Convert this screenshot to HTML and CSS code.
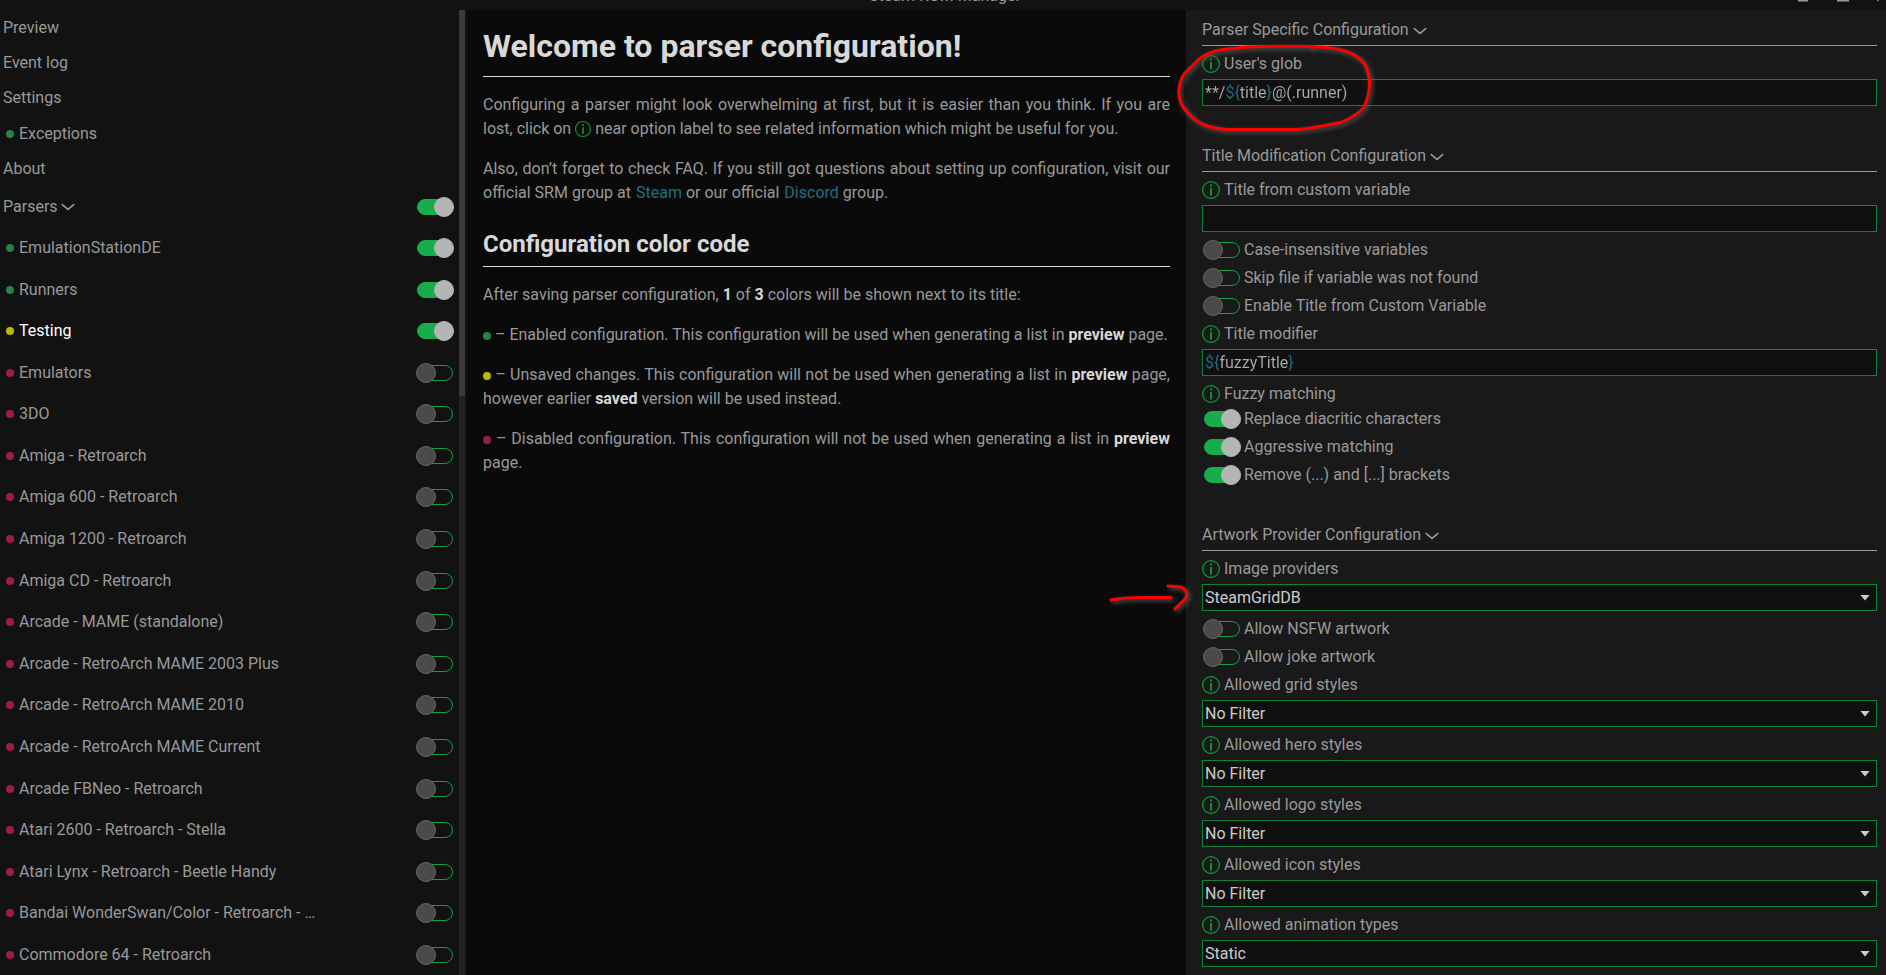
FILE: index.html
```html
<!DOCTYPE html>
<html lang="en">
<head>
<meta charset="utf-8">
<title>Steam ROM Manager</title>
<link rel="stylesheet" href="styles.css">
</head>
<body>
<svg class="defs" aria-hidden="true">
  <symbol id="info" viewBox="0 0 18 18"><circle cx="9" cy="9" r="8.4" fill="none" stroke="currentColor" stroke-width="1.2"/><path d="M9 3.500v2M9 7v7.500" stroke="currentColor" stroke-width="1.800"/></symbol>
  <symbol id="chevron" viewBox="0 0 14 8"><path d="M.7 1.2 7 6.4l6.300-5.200" fill="none" stroke="currentColor" stroke-width="1.6"/></symbol>
</svg>
<div class="app">
  <header class="titlebar">
    <span class="titlebar-name">Steam ROM Manager</span>
    <svg class="window-buttons" viewBox="0 0 90 10" aria-hidden="true"><path d="M2 .5h10M41 .5h12" stroke="#999" stroke-width="2"/><path d="M81 1l2-1" stroke="#999"/></svg>
  </header>
  <div class="columns">
    <aside class="sidebar">
      <nav class="nav">
        <a class="nav-link" href="#preview">Preview</a>
        <a class="nav-link" href="#log">Event log</a>
        <a class="nav-link" href="#settings">Settings</a>
        <a class="nav-link nav-marked" href="#exceptions"><i class="dot green"></i>Exceptions</a>
        <a class="nav-link" href="#about">About</a>
        <div class="row row-parsers"><a class="row-name" href="#parsers">Parsers <svg class="chevron"><use href="#chevron"/></svg></a><input class="toggle" type="checkbox" aria-label="Parsers" checked></div>
        <div class="parsers">
          <div class="row"><a class="row-name" href="#p1"><i class="dot green"></i><span class="ellipsis">EmulationStationDE</span></a><input class="toggle" type="checkbox" aria-label="EmulationStationDE" checked></div>
          <div class="row"><a class="row-name" href="#p2"><i class="dot green"></i><span class="ellipsis">Runners</span></a><input class="toggle" type="checkbox" aria-label="Runners" checked></div>
          <div class="row"><a class="row-name active" href="#p3"><i class="dot yellow"></i><span class="ellipsis">Testing</span></a><input class="toggle" type="checkbox" aria-label="Testing" checked></div>
          <div class="row"><a class="row-name" href="#p4"><i class="dot red"></i><span class="ellipsis">Emulators</span></a><input class="toggle" type="checkbox" aria-label="Emulators"></div>
          <div class="row"><a class="row-name" href="#p5"><i class="dot red"></i><span class="ellipsis">3DO</span></a><input class="toggle" type="checkbox" aria-label="3DO"></div>
          <div class="row"><a class="row-name" href="#p6"><i class="dot red"></i><span class="ellipsis">Amiga - Retroarch</span></a><input class="toggle" type="checkbox" aria-label="Amiga - Retroarch"></div>
          <div class="row"><a class="row-name" href="#p7"><i class="dot red"></i><span class="ellipsis">Amiga 600 - Retroarch</span></a><input class="toggle" type="checkbox" aria-label="Amiga 600 - Retroarch"></div>
          <div class="row"><a class="row-name" href="#p8"><i class="dot red"></i><span class="ellipsis">Amiga 1200 - Retroarch</span></a><input class="toggle" type="checkbox" aria-label="Amiga 1200 - Retroarch"></div>
          <div class="row"><a class="row-name" href="#p9"><i class="dot red"></i><span class="ellipsis">Amiga CD - Retroarch</span></a><input class="toggle" type="checkbox" aria-label="Amiga CD - Retroarch"></div>
          <div class="row"><a class="row-name" href="#p10"><i class="dot red"></i><span class="ellipsis">Arcade - MAME (standalone)</span></a><input class="toggle" type="checkbox" aria-label="Arcade - MAME (standalone)"></div>
          <div class="row"><a class="row-name" href="#p11"><i class="dot red"></i><span class="ellipsis">Arcade - RetroArch MAME 2003 Plus</span></a><input class="toggle" type="checkbox" aria-label="Arcade - RetroArch MAME 2003 Plus"></div>
          <div class="row"><a class="row-name" href="#p12"><i class="dot red"></i><span class="ellipsis">Arcade - RetroArch MAME 2010</span></a><input class="toggle" type="checkbox" aria-label="Arcade - RetroArch MAME 2010"></div>
          <div class="row"><a class="row-name" href="#p13"><i class="dot red"></i><span class="ellipsis">Arcade - RetroArch MAME Current</span></a><input class="toggle" type="checkbox" aria-label="Arcade - RetroArch MAME Current"></div>
          <div class="row"><a class="row-name" href="#p14"><i class="dot red"></i><span class="ellipsis">Arcade FBNeo - Retroarch</span></a><input class="toggle" type="checkbox" aria-label="Arcade FBNeo - Retroarch"></div>
          <div class="row"><a class="row-name" href="#p15"><i class="dot red"></i><span class="ellipsis">Atari 2600 - Retroarch - Stella</span></a><input class="toggle" type="checkbox" aria-label="Atari 2600 - Retroarch - Stella"></div>
          <div class="row"><a class="row-name" href="#p16"><i class="dot red"></i><span class="ellipsis">Atari Lynx - Retroarch - Beetle Handy</span></a><input class="toggle" type="checkbox" aria-label="Atari Lynx - Retroarch - Beetle Handy"></div>
          <div class="row"><a class="row-name" href="#p17"><i class="dot red"></i><span class="ellipsis">Bandai WonderSwan/Color - Retroarch - …</span></a><input class="toggle" type="checkbox" aria-label="Bandai WonderSwan/Color - Retroarch"></div>
          <div class="row"><a class="row-name" href="#p18"><i class="dot red"></i><span class="ellipsis">Commodore 64 - Retroarch</span></a><input class="toggle" type="checkbox" aria-label="Commodore 64 - Retroarch"></div>
        </div>
      </nav>
      <div class="scrollbar"><div class="scrollbar-thumb"></div></div>
    </aside>

    <main class="guide">
      <h1>Welcome to parser configuration!</h1>
      <p>Configuring a parser might look overwhelming at first, but it is easier than you think. If you are lost, click on <svg class="info info-inline" role="img" aria-label="info"><use href="#info"/></svg> near option label to see related information which might be useful for you.</p>
      <p>Also, don’t forget to check FAQ. If you still got questions about setting up configuration, visit our official SRM group at <a class="link" href="#steam">Steam</a> or our official <a class="link" href="#discord">Discord</a> group.</p>
      <h2>Configuration color code</h2>
      <p>After saving parser configuration, <strong>1</strong> of <strong>3</strong> colors will be shown next to its title:</p>
      <p><i class="dot green"></i> – Enabled configuration. This configuration will be used when generating a list in <strong>preview</strong> page.</p>
      <p><i class="dot yellow"></i> – Unsaved changes. This configuration will not be used when generating a list in <strong>preview</strong> page, however earlier <strong>saved</strong> version will be used instead.</p>
      <p><i class="dot red"></i> – Disabled configuration. This configuration will not be used when generating a list in <strong>preview</strong> page.</p>
    </main>

    <form class="config">
      <section class="section">
        <h3>Parser Specific Configuration <svg class="chevron"><use href="#chevron"/></svg></h3>
        <label class="label" for="glob"><svg class="info"><use href="#info"/></svg>User's glob</label>
        <div class="field"><input class="text tinted tinted-glob" id="glob" type="text" spellcheck="false" value="**/${title}@(.runner)"></div>
      </section>
      <section class="section">
        <h3>Title Modification Configuration <svg class="chevron"><use href="#chevron"/></svg></h3>
        <label class="label" for="custom"><svg class="info"><use href="#info"/></svg>Title from custom variable</label>
        <div class="field"><input class="text" id="custom" type="text"></div>
        <div class="toggles">
          <label class="option"><input class="toggle" type="checkbox">Case-insensitive variables</label>
          <label class="option"><input class="toggle" type="checkbox">Skip file if variable was not found</label>
          <label class="option"><input class="toggle" type="checkbox">Enable Title from Custom Variable</label>
        </div>
        <label class="label" for="modifier"><svg class="info"><use href="#info"/></svg>Title modifier</label>
        <div class="field"><input class="text tinted tinted-modifier" id="modifier" type="text" spellcheck="false" value="${fuzzyTitle}"></div>
        <div class="label"><svg class="info"><use href="#info"/></svg>Fuzzy matching</div>
        <div class="toggles">
          <label class="option"><input class="toggle" type="checkbox" checked>Replace diacritic characters</label>
          <label class="option"><input class="toggle" type="checkbox" checked>Aggressive matching</label>
          <label class="option"><input class="toggle" type="checkbox" checked>Remove (...) and [...] brackets</label>
        </div>
      </section>
      <section class="section">
        <h3>Artwork Provider Configuration <svg class="chevron"><use href="#chevron"/></svg></h3>
        <label class="label" for="providers"><svg class="info"><use href="#info"/></svg>Image providers</label>
        <div class="field field-select"><select class="select" id="providers"><option>SteamGridDB</option></select></div>
        <div class="toggles">
          <label class="option"><input class="toggle" type="checkbox">Allow NSFW artwork</label>
          <label class="option"><input class="toggle" type="checkbox">Allow joke artwork</label>
        </div>
        <label class="label" for="grid"><svg class="info"><use href="#info"/></svg>Allowed grid styles</label>
        <div class="field field-select"><select class="select" id="grid"><option>No Filter</option></select></div>
        <label class="label" for="hero"><svg class="info"><use href="#info"/></svg>Allowed hero styles</label>
        <div class="field field-select"><select class="select" id="hero"><option>No Filter</option></select></div>
        <label class="label" for="logo"><svg class="info"><use href="#info"/></svg>Allowed logo styles</label>
        <div class="field field-select"><select class="select" id="logo"><option>No Filter</option></select></div>
        <label class="label" for="icon"><svg class="info"><use href="#info"/></svg>Allowed icon styles</label>
        <div class="field field-select"><select class="select" id="icon"><option>No Filter</option></select></div>
        <label class="label" for="animation"><svg class="info"><use href="#info"/></svg>Allowed animation types</label>
        <div class="field field-select"><select class="select" id="animation"><option>Static</option></select></div>
      </section>
      <svg class="markup" viewBox="1106 10 280 620" aria-hidden="true">
        <path d="M1312 48 1313 46.500C1300 46 1262 46 1241 47.500 1232 49 1222 49 1215.500 51 1206 54 1201 57 1197 61L1184 74C1178 84 1177 97 1183 107 1189 115 1194 120 1202 124 1212 128 1218 129 1227 129.500H1294C1312 129 1325 125 1341 122.500 1349 119 1359 114 1364 107 1369 97 1370 90 1369.500 80 1368 72 1367 67 1364 63 1358 56 1350 52 1341 50 1332 47 1323 47 1311 46.500"/>
        <path d="M1111 600C1120 598 1132 597.500 1143 597.500H1171M1168 586C1174 587 1179 586 1183 588 1187 591 1188 595 1185 599 1182 603 1178 605 1175 609"/>
      </svg>
    </form>
  </div>
</div>
</body>
</html>
```
FILE: styles.css
```css
* { box-sizing: border-box; }

body {
  margin: 0;
  background: #0a0a0a;
  color: #999;
  font: 16px/24px Roboto, "Liberation Sans", sans-serif;
}

a { color: inherit; text-decoration: none; }

.defs { position: absolute; width: 0; height: 0; }

.app {
  display: flex;
  flex-direction: column;
  height: 100vh;
  overflow: hidden;
}

.titlebar {
  display: grid;
  grid-template: 10px / 1fr auto 1fr;
  align-items: end;
  flex: none;
  overflow: hidden;
  background: #121212;
}
.titlebar-name { grid-column: 2; padding: 0 0 2px 4px; }
.window-buttons { justify-self: end; width: 90px; height: 10px; }

.columns {
  display: grid;
  grid-template-columns: 467px 719fr 700fr;
  flex: 1;
  min-height: 0;
}

/* Sidebar */
.sidebar { display: flex; padding-right: 2px; background: #121212; min-height: 0; }
.nav { display: flex; flex-direction: column; flex: 1; min-width: 0; }
.nav-link { padding-left: 3px; line-height: 35px; }
.nav-marked { display: flex; align-items: center; padding: 1px 0 0 6px; }
.parsers { display: flex; flex-direction: column; justify-content: space-between; flex: 1; }
.row { display: flex; align-items: center; justify-content: space-between; padding: 0 6px; height: 40px; }
.row-parsers { height: 42px; padding-left: 3px; }
.row-name { display: flex; align-items: center; min-width: 0; }
.row-name .chevron { margin-left: 3px; }
.active { color: #fff; }
.ellipsis { overflow: hidden; white-space: nowrap; text-overflow: ellipsis; }

.scrollbar { width: 6px; background: #222; }
.scrollbar-thumb { height: 40%; background: #3b3b3b; }

.dot { display: inline-block; flex: none; width: 8px; height: 8px; border-radius: 50%; }
.nav .dot { margin-right: 5px; }
.green { background: #268446; }
.yellow { background: #baba00; }
.red { background: #9b1c4a; }

.chevron { width: 14px; height: 8px; }

.toggle {
  appearance: none;
  display: flex;
  align-items: center;
  flex: none;
  width: 36px;
  height: 16px;
  margin: 0;
  border: 1px solid #14a049;
  border-radius: 8px;
}
.toggle::before {
  content: "";
  flex: none;
  width: 18px;
  height: 18px;
  margin: 0 -2px;
  border: 1px solid #666;
  border-radius: 50%;
  background: #4a4a4a;
}
.toggle:checked { justify-content: flex-end; border-color: #18ad4c; background: #18ad4c; }
.toggle:checked::before { border-color: #b4b6b6; background: #b4b6b6; }

/* Guide */
.guide { padding: 12px 16px; text-align: justify; }
.guide h1, .guide h2 { margin: 0; border-bottom: 1px solid #d8d8d8; color: #d8d8d8; text-align: left; }
.guide h1 { padding-bottom: 6px; font-size: 32px; line-height: 48px; }
.guide h2 { margin-top: 21px; padding-bottom: 4px; font-size: 24px; line-height: 36px; }
.guide p { margin: 16px 0; }
.guide strong { color: #d8d8d8; }
.link { padding-left: 1px; color: #1f6f84; }

.info { flex: none; width: 18px; height: 18px; color: #08a032; }
.info-inline { width: 16px; height: 16px; vertical-align: -3px; }

/* Configuration */
.config { position: relative; padding: 8px 9px 0 16px; background: #191919; }
.section + .section { margin-top: 38px; }
.section h3 {
  margin: 0;
  padding-bottom: 3px;
  border-bottom: 1px solid #999;
  font-size: 16px;
  font-weight: 400;
}
.label { display: flex; align-items: center; gap: 4px; margin-top: 7px; line-height: 22px; }
.field { display: grid; height: 27px; margin-top: 4px; border: 1px solid #118038; background: #101010; }
.text, .select {
  appearance: none;
  grid-area: 1 / 1;
  width: 100%;
  margin: 0;
  padding: 0 2px;
  border: 0;
  outline: 0;
  background: none;
  color: #aaa;
  font: inherit;
}
.select { color: #ccc; }
.field-select::after {
  content: "";
  grid-area: 1 / 1;
  align-self: center;
  justify-self: end;
  width: 10px;
  height: 6px;
  margin-right: 6px;
  background: #ccc;
  clip-path: polygon(0 0, 100% 0, 50% 100%);
  pointer-events: none;
}
/* Template delimiters are tinted through the text */
.tinted { background-clip: text; -webkit-text-fill-color: transparent; }
.tinted-glob { background-image: linear-gradient(90deg, #aaa 22px, #1f6f84 22px 37px, #aaa 37px 64px, #1f6f84 64px 69px, #aaa 69px); }
.tinted-modifier { background-image: linear-gradient(90deg, #1f6f84 17px, #aaa 17px 85px, #1f6f84 85px); }

.toggles { margin-bottom: -4px; }
.field + .toggles { margin-top: 4px; }
.option { display: flex; align-items: center; gap: 4px; padding-left: 2px; line-height: 28px; }

.markup {
  position: absolute;
  top: 0;
  left: -80px;
  width: 280px;
  height: 620px;
  fill: none;
  stroke: #f00;
  stroke-width: 3;
  stroke-linecap: round;
  stroke-linejoin: round;
  filter: drop-shadow(2px 2px 2px #555);
  pointer-events: none;
}
```
